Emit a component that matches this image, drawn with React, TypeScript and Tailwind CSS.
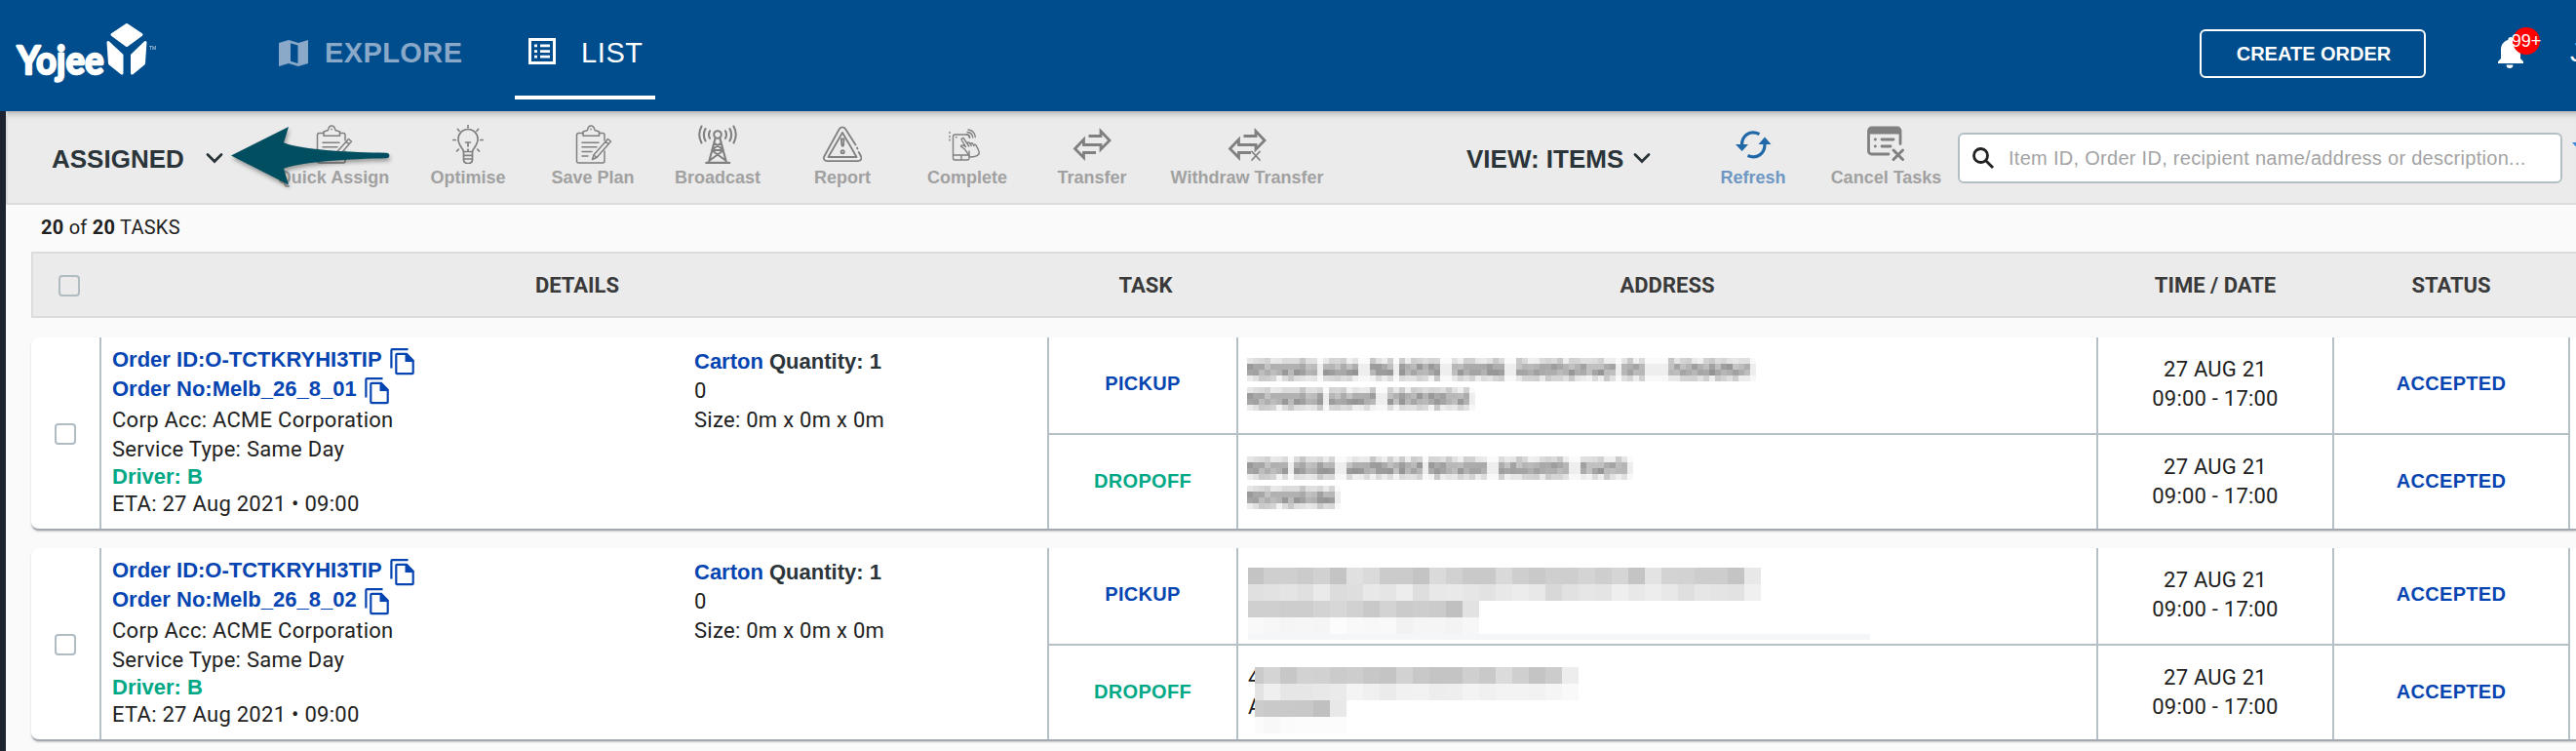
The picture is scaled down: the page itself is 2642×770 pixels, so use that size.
import type { ReactNode } from "react";

const ARIAL = "font-['Liberation_Sans',Arial,sans-serif]";
const ROBOTO = "font-[Roboto,sans-serif]";

function Logo() {
  return (
    <svg width="152" height="66" viewBox="0 0 152 66" fill="#fff" className="shrink-0">
      <text
        x="1.5"
        y="54"
        fontFamily="Lato, sans-serif"
        fontWeight="700"
        fontSize="40"
        stroke="#fff"
        strokeWidth="2.4"
        strokeLinejoin="round"
        textLength="89"
        lengthAdjust="spacingAndGlyphs"
      >
        Yojee
      </text>
      <g stroke="#fff" strokeWidth="3" strokeLinejoin="round">
        <path d="M114 3.5 129 13.5 114 24.500 99 13.500z" />
        <path d="M95 21.500 109 34.500V53L96.500 43z" />
        <path d="M133 21.500 119.500 34.500V53L131.500 43z" />
      </g>
      <text x="137" y="28.500" fontFamily="Liberation Sans, sans-serif" fontSize="5" opacity=".8">TM</text>
    </svg>
  );
}

function MapIcon() {
  return (
    <svg width="30" height="27" viewBox="0 0 30 27" fill="#8aa8c8" fillRule="evenodd">
      <path d="M0 3 10 0l10 3L30 0v24l-10 3-10-3-10 3zM12 3.200v18.500L19.500 24V5.500z" />
    </svg>
  );
}

function ListIcon() {
  return (
    <svg width="28" height="27" viewBox="0 0 28 27" fill="#fff">
      <path fillRule="evenodd" d="M0 0h28v27H0zM3 3v21h22V3z" />
      <path d="M6 6.500h3v2.800H6zM12 6.500h10v2.800H12zM6 12.200h3V15H6zM12 12.200h10V15H12zM6 17.800h3v2.800H6zM12 17.800h10v2.800H12z" />
    </svg>
  );
}

function Icon({ children, w = 1.7 }: { children: ReactNode; w?: number }) {
  return (
    <svg
      width="40"
      height="40"
      viewBox="0 0 40 40"
      fill="none"
      stroke="#808080"
      strokeWidth={w}
      strokeLinecap="round"
      strokeLinejoin="round"
      className="shrink-0"
    >
      {children}
    </svg>
  );
}

const Clipboard = () => (
  <Icon w={1.5}>
    <path d="M10 8.500H5.500a2 2 0 0 0-2 2V37a2 2 0 0 0 2 2h24.500a2 2 0 0 0 2-2V27M26.500 8.500H30a2 2 0 0 1 2 2V16" />
    <path d="M10 11.200V7l4.500-1.500C15 2.500 16 1 18 1s3.500 1.500 4 4.500L26.500 7v4.200z" />
    <path d="M18 4.200v.6M9 18.200h17M9 22.700h15M9 27.500h10M9 32h6" />
    <path d="m35.500 14.500 3 2.500-14.500 16.500-4.500 2 1.500-4.700zM33 17l3 2.700M21 31l3 2.500" />
  </Icon>
);

const Bulb = () => (
  <Icon w={1.7}>
    <path d="M15.500 27.500c0-3-5.500-6-5.500-13a10 10 0 0 1 20 0c0 7-5.500 10-5.500 13z" />
    <path d="M15.500 27.500v8c0 2.500 2 4 4.500 4s4.500-1.500 4.500-4v-8M16 31.300h8.500M16 35h8.500M17.500 18h5M20 18v4M20 25v2" />
    <path d="M20 .8v2M9.500 4.500l1.500 1.800M30.500 4.500 29 6.300M4.800 15.500h2.500M32.700 15.500h2.500M8.500 27l1.800-1.800M31.500 27l-1.800-1.800" />
  </Icon>
);

const Tower = () => (
  <Icon w={2.1}>
    <circle cx="20" cy="10" r="3.800" />
    <path strokeWidth="2.5" d="M8.500 39H32" />
    <path d="M17.500 14 11 38.500M22.500 14 29 38.500M16.500 18.500l9 7M23.500 18.500l-9 7M14.500 26.500l13 9.500M25.500 26.500l-13 9.500M14.500 26h11" />
    <path d="M12 6.300a8 8 0 0 0 0 7.500M28 6.300a8 8 0 0 1 0 7.500M7.500 4a13 13 0 0 0 0 12.300M32.500 4a13 13 0 0 1 0 12.300M3.500 1.500a18 18 0 0 0 0 17M36.500 1.500a18 18 0 0 1 0 17" />
  </Icon>
);

const Warning = () => (
  <Icon w={1.8}>
    <path d="M33.500 20.500 23.300 4.500a3.700 3.700 0 0 0-6.600 0L1.500 32c-1.500 2.700 0 5.200 3 5.200h31c3.500 0 5-2.500 3.300-5.500l-2-3.700M35 23.500l.5 1" />
    <path d="M20 8 5.500 33h29L28 21.500 20 8" />
    <path d="M18.800 14.500h2.800l-.6 7h-1.500z" />
    <circle cx="20.200" cy="27.800" r="1.600" />
  </Icon>
);

const Tap = () => (
  <Icon w={1.4}>
    <path d="M22 27v7a2 2 0 0 1-2 2H7.500a2 2 0 0 1-2-2V12a2 2 0 0 1 2-2H20a2 2 0 0 1 2 2v1M5.500 31H22M14 32v3M8.500 12.800h.6" />
    <path d="M18.500 26.500c-1.500-2.500-3.500-3-5-4.800 1-1.500 3.500-.6 5 .8l-4.500-7.500c0-1.800 2-1.800 2.800-.6l5 7.600-1.800-3c.5-1.400 2-1.200 2.600-.2l1.600 2.700-1-2c.8-1.100 2-.8 2.600.1l1.200 2-.5-1c.7-.9 1.800-.5 2.400.3 1.600 2.600 3.600 6.100 3.300 8.600-1.500 2.300-6 3.500-9.200 3.500-2-1.500-2.300-4-4.500-6.500z" />
    <path d="M2 7.500v1M2 11.500v1M2 15v1M19.500 10c1.800.2 3 1.500 3.300 3.200M20 7.500c3.500.3 5.500 2.500 5.800 5.500M21 5c4.500.5 6.800 3.500 7.300 7.500" />
  </Icon>
);

const Arrows = ({ x = false }: { x?: boolean }) => (
  <Icon w={2.8}>
    <g strokeLinecap="butt" strokeLinejoin="miter">
      <path d="M16.500 11.500H29V6.500L38 16 29 25v-4.500H11.500V15L2.500 24.500l9 9v-5H24" />
    </g>
    {x && <path strokeWidth="1.8" d="M25 27.500l8 8.500M33 27.500l-8 8.500" />}
  </Icon>
);

const Refresh = () => (
  <svg width="40" height="40" viewBox="0 0 40 40" fill="none" stroke="#2068a8" strokeWidth="3.2">
    <path d="M26.500 9.500C17 5 8.500 10.500 8.500 20.500M14.500 31.500c9.500 4 17.500-2 17.500-11.500" />
    <path fill="#2068a8" stroke="none" d="M2 20h13l-6.300 7zM25.500 20h13L32 12.500z" />
  </svg>
);

const CancelTasks = () => (
  <svg width="40" height="40" viewBox="0 0 40 40" fill="none" stroke="#808080" strokeWidth="2.8" strokeLinecap="round">
    <path d="M34 19.500V6a3 3 0 0 0-3-3H4.500a3 3 0 0 0-3 3v21a3 3 0 0 0 3 3H22" />
    <path fill="#808080" stroke="none" d="M1.500 4.500 4 2h27.500L34 4.500V9.500H1.500z" />
    <path d="M8.200 15h.2M8.200 22h.2M15 15h12M15 22h9" />
    <path d="M27 26l9.500 9.500M36.500 26 27 35.500" strokeWidth="3" />
  </svg>
);

function Chevron() {
  return (
    <svg width="18" height="12" viewBox="0 0 18 12" fill="none" stroke="#2a3439" strokeWidth="2.8" strokeLinecap="round">
      <path d="M2 2.500 9 9.500 16 2.500" />
    </svg>
  );
}

function Tool({ label, width, children, active = false }: { label: string; width: string; children: ReactNode; active?: boolean }) {
  return (
    <div className={`flex ${width} shrink-0 flex-col items-center pt-3 ${ARIAL}`}>
      {children}
      <span className={`mt-0.5 h-6 whitespace-nowrap text-[18px] font-bold leading-6 ${active ? "text-[#6f97c3]" : "text-[#a1a1a1]"}`}>{label}</span>
    </div>
  );
}

function Checkbox() {
  return <span className="block size-[22px] shrink-0 rounded-[4px] border-2 border-[#b0bbc2]" />;
}

function CopyIcon() {
  return (
    <svg width="26" height="28" viewBox="0 0 26 28" fill="none" stroke="#0645b1" strokeWidth="2.2" className="shrink-0">
      <path d="M1.400 20.500V2.200a1 1 0 0 1 1-1H18.500" />
      <path d="M7.300 5.800H17l6.700 7v12.400a1 1 0 0 1-1 1H7.300a1 1 0 0 1-1-1V6.800a1 1 0 0 1 1-1z" />
      <path fill="#0645b1" stroke="none" d="M15.500 5v9H25z" />
    </svg>
  );
}

type Word = [start: number, length: number];

const BASE = [219, 174, 170, 222];
const GAP = [250, 238, 238, 248];

function shade(row: number, col: number, words: Word[]) {
  if (!words.some(([start, length]) => col >= start && col < start + length)) return GAP[row];
  const h = Math.sin((col + 1) * 12.9898 + (row + 1) * 78.233) * 43758.5453;
  const noise = (h - Math.floor(h) - 0.5) * (row === 0 || row === 3 ? 44 : 46);
  return BASE[row] + noise;
}

/* Redacted line of text: every word is a run of grey 6px cells, four cells tall. */
function RedactedLine({ words }: { words: Word[] }) {
  const [start, length] = words[words.length - 1];
  return (
    <div className="flex h-6">
      {Array.from({ length: start + length + 1 }, (_, c) => (
        <div key={c} className="flex w-1.5 flex-col">
          {BASE.map((_, r) => {
            const v = Math.round(shade(r, c, words));
            return <span key={r} className="h-1.5" style={{ background: `rgb(${v},${v},${v})` }} />;
          })}
        </div>
      ))}
    </div>
  );
}

/* Redacted block: each pair of hex digits is one grey 17px cell. */
function RedactedBlock({ rows, first }: { rows: string[]; first: number }) {
  return (
    <div className="flex flex-col">
      {rows.map((row, i) => (
        <div key={i} className="flex h-[17px]">
          {row.split(" ").map((c, j) => (
            <span key={j} className="h-full" style={{ width: j === 0 ? first : 17, background: `#${c}${c}${c}` }} />
          ))}
        </div>
      ))}
    </div>
  );
}

const LINE_A: Word[] = [[0, 12], [13, 6], [21, 4], [26, 7], [35, 9], [46, 17], [64, 4], [72, 14]];
const LINE_B: Word[] = [[0, 13], [14, 8], [24, 14]];
const LINE_C: Word[] = [[0, 7], [8, 7], [17, 13], [31, 10], [43, 12], [57, 8]];
const LINE_D: Word[] = [[0, 15]];

const BLOCK_A = [
  "c4 cf cf cb d1 c4 e0 da cb cb c4 da d1 c9 c9 d9 ce c9 cf ce d4 ce d5 c4 e3 d3 d2 cd cd c4 e8",
  "e0 e2 e4 e0 ea dc de e8 e5 ed de e8 e9 e6 e2 e8 ec e8 d8 e1 e6 e4 ee e8 ed e8 df e6 e4 e2 f0",
  "cf cf cd cd d3 d7 d1 c9 d3 cb cd cb c0 e2",
  "f9 f7 f5 f6 f5 fc f9 f8 f9 f2 f5 f5 f3 f7",
];
const BLOCK_B = [
  "ca d4 c7 d2 d1 cb cd c7 c4 d2 c8 c4 c4 cf c9 db cf c4 cc ed",
  "e3 ef e6 e6 e8 ea f4 f0 eb f1 f2 ed ee f3 f0 f3 f3 f2 f5 f9",
  "cc c9 c9 c8 c0 e8",
  "fb f8 fb fc fc fc",
];

function Stop({ last = false, address }: { last?: boolean; address: ReactNode }) {
  const cell = "shrink-0 border-r-2 border-[#b5bfc6]";
  return (
    <div className={`flex w-[1560px] shrink-0 ${last ? "h-24" : "h-[100px] border-b-2 border-[#b5bfc6]"}`}>
      <div className={`${cell} w-[194px] pt-[33px] text-center ${ARIAL} text-[20px] font-bold leading-7 tracking-[.3px] ${last ? "text-[#00a886]" : "text-[#0645b1]"}`}>
        {last ? "DROPOFF" : "PICKUP"}
      </div>
      <div className={`${cell} w-[882px] overflow-hidden`}>{address}</div>
      <div className={`${cell} w-[242px] pt-[18px] text-center text-[22px] leading-[30px] tracking-[.22px]`}>
        27 AUG 21
        <br />
        09:00 - 17:00
      </div>
      <div className={`${cell} w-[242px] pt-[33px] text-center ${ARIAL} text-[20px] font-bold leading-7 tracking-[.3px] text-[#0645b1]`}>ACCEPTED</div>
    </div>
  );
}

function OrderCard({ orderNo, pickup, dropoff }: { orderNo: string; pickup: ReactNode; dropoff: ReactNode }) {
  const link = `flex h-[30px] ${ARIAL} text-[22px] font-bold leading-[30px] tracking-normal text-[#0645b1]`;
  return (
    <div className="flex h-[198px] shrink-0 overflow-hidden rounded-l-[8px] border-b-2 border-[#a3a9ae] bg-white shadow-[0_1px_2px_rgba(0,0,0,.2)]">
      <div className="flex w-[72px] shrink-0 items-center border-r-2 border-[#b5bfc6] pl-6 pt-0.5">
        <Checkbox />
      </div>
      <div className="w-[598px] shrink-0 whitespace-nowrap pl-[11px] pt-2 text-[22px] tracking-[.27px]">
        <div className={link}>
          <span className="w-[285px]">Order ID:O-TCTKRYHI3TIP</span>
          <span className="mt-[3px]"><CopyIcon /></span>
        </div>
        <div className={link}>
          <span className="w-[259px]">Order No:{orderNo}</span>
          <span className="mt-[3px]"><CopyIcon /></span>
        </div>
        <div className="h-8 leading-[33px]">Corp Acc: ACME Corporation</div>
        <div className="h-7 leading-[29px]">Service Type: Same Day</div>
        <div className={`h-7 ${ARIAL} text-[22px] font-bold leading-[30px] tracking-normal text-[#00a886]`}>Driver: B</div>
        <div className="h-7 leading-[30px]">ETA: 27 Aug 2021 • 09:00</div>
      </div>
      <div className="w-[374px] shrink-0 border-r-2 border-[#b5bfc6] pl-[10px] pt-2.5 text-[22px] leading-[30px] tracking-[.27px]">
        <div className={`h-[30px] ${ARIAL} font-bold leading-[30px] tracking-normal text-[#2a3439]`}>
          <span className="text-[#0645b1]">Carton</span> Quantity: 1
        </div>
        <div>0</div>
        <div>Size: 0m x 0m x 0m</div>
      </div>
      <div className="shrink-0">
        <Stop address={pickup} />
        <Stop last address={dropoff} />
      </div>
    </div>
  );
}

export default function App() {
  return (
    <div className={`flex h-[770px] w-full flex-col overflow-hidden bg-[#fafafa] text-[#212121] ${ROBOTO}`}>
      <header className={`flex h-[114px] shrink-0 bg-[#004d8e] ${ARIAL} text-white`}>
        <div className="w-[286px] shrink-0 pl-4 pt-[22px]">
          <Logo />
        </div>
        <div className="flex w-[242px] shrink-0 pt-[41px] text-[#8aa8c8]">
          <MapIcon />
          <span className="-mt-1 ml-[17px] text-[29px] font-bold leading-[34px] tracking-[.4px]">EXPLORE</span>
        </div>
        <div className="flex h-[102px] w-36 shrink-0 border-b-4 border-white pl-3.5 pt-[39px]">
          <ListIcon />
          <span className="-mt-0.5 ml-[26px] text-[29px] leading-[34px] tracking-[.6px]">LIST</span>
        </div>
        <div className="ml-auto mt-[30px] flex h-[50px] w-[232px] shrink-0 items-center justify-center rounded-[6px] border-2 border-white pb-px pl-0.5 text-[20px] font-bold">CREATE ORDER</div>
        <div className="relative ml-[68px] w-20 shrink-0 pl-1.5 pt-[38px]">
          <svg width="26" height="32" viewBox="0 0 26 32" fill="#fff">
            <path d="M13 0c2 0 2.700 1.500 2.700 3C20.500 4.300 23 8.300 23 13v9l3 3v2H0v-2l3-3v-9c0-4.700 2.500-8.700 7.300-10C10.300 1.500 11 0 13 0zM8.500 28.500h7C15.500 31 14 32 12 32s-3.500-1-3.500-3.500z" />
          </svg>
          <span className="absolute left-[21px] top-7 flex size-7 items-center justify-center whitespace-nowrap rounded-full bg-[#f00] text-[18px]">99+</span>
        </div>
        <span className="w-1.5 shrink-0 overflow-hidden pt-[38px] text-[28px] leading-8">J</span>
      </header>

      <div className="flex min-h-0 flex-1">
        <div className="w-1.5 shrink-0 bg-[#1d2331]" />
        <main className="flex min-w-0 flex-1 flex-col">
          <div className="relative flex h-24 shrink-0 border-b-2 border-l-2 border-t-2 border-[#dcdcdc] border-t-[#c5c2c2] bg-[#ebebeb] shadow-[inset_0_7px_6px_-6px_rgba(0,0,0,.22)]">
            <div className={`flex w-[260px] shrink-0 pl-[45px] pt-[31px] ${ARIAL} text-[26px] font-bold leading-8 text-[#2a3439]`}>
              ASSIGNED
              <span className="ml-[22px] mt-[9px]"><Chevron /></span>
            </div>
            <Tool label="Quick Assign" width="w-[148px]"><Clipboard /></Tool>
            <Tool label="Optimise" width="w-32"><Bulb /></Tool>
            <Tool label="Save Plan" width="w-32"><Clipboard /></Tool>
            <Tool label="Broadcast" width="w-32"><Tower /></Tool>
            <Tool label="Report" width="w-32"><Warning /></Tool>
            <Tool label="Complete" width="w-32"><Tap /></Tool>
            <Tool label="Transfer" width="w-32"><Arrows /></Tool>
            <Tool label="Withdraw Transfer" width="w-[190px]"><Arrows x /></Tool>
            <div className={`ml-[130px] flex w-[230px] shrink-0 whitespace-nowrap pt-[31px] ${ARIAL} text-[26px] font-bold leading-8 text-[#2a3439]`}>
              VIEW: ITEMS
              <span className="ml-[10px] mt-[9px]"><Chevron /></span>
            </div>
            <Tool label="Refresh" width="w-32" active><Refresh /></Tool>
            <Tool label="Cancel Tasks" width="w-[145px]"><CancelTasks /></Tool>
            <div className={`ml-px mt-5 flex h-[52px] w-[620px] shrink-0 items-center rounded-[6px] border-2 border-[#b4bfc5] bg-white pl-3 ${ARIAL} text-[20px] text-[#a3a3a3]`}>
              <svg width="24" height="24" viewBox="0 0 24 24" fill="none" stroke="#212121" strokeWidth="2.8">
                <circle cx="9.500" cy="9.500" r="7" />
                <path d="m14.500 14.500 7.500 7.500" />
              </svg>
              <span className="ml-[14px] whitespace-nowrap pb-px tracking-[.29px]">Item ID, Order ID, recipient name/address or description...</span>
            </div>
            <svg width="14" height="8" viewBox="0 0 14 8" className="ml-2.5 mt-[30px] shrink-0">
              <path d="M0 0h14L7 8z" fill="#3b86d8" />
            </svg>
            <svg width="180" height="72" viewBox="0 0 180 72" className="absolute left-[222px] top-[10px] drop-shadow-[1px_3px_2px_rgba(0,0,0,.35)]">
              <path fill="#004e5f" d="M7 33.500 66 4l-5 16.200C80 28 130 30 166 30.700c4.500 0 4.500 5.600 0 5.600-36 .7-86 3.200-105 10.500L66 63.500z" />
            </svg>
          </div>

          <div className="h-12 shrink-0 pl-9 pt-2 text-[20px] leading-[30px] tracking-[.25px]">
            <b>20</b> of <b>20</b> TASKS
          </div>

          <div className="ml-[26px] flex h-[68px] shrink-0 items-center border-2 border-r-0 border-[#dcdcdc] bg-[#ebebeb] text-center text-[22px] font-bold text-[#3a3a3a]">
            <div className="w-[72px] shrink-0 pl-[26px] pt-0.5"><Checkbox /></div>
            <div className="w-[972px] shrink-0">DETAILS</div>
            <div className="w-[194px] shrink-0">TASK</div>
            <div className="w-[876px] shrink-0">ADDRESS</div>
            <div className="w-[248px] shrink-0">TIME / DATE</div>
            <div className="w-[236px] shrink-0">STATUS</div>
          </div>

          <div className="ml-[26px] flex flex-col gap-[18px] pt-5">
            <OrderCard
              orderNo="Melb_26_8_01"
              pickup={
                <div className="flex flex-col gap-1.5 pl-[9px] pt-[21px]">
                  <RedactedLine words={LINE_A} />
                  <RedactedLine words={LINE_B} />
                </div>
              }
              dropoff={
                <div className="flex flex-col gap-1.5 pl-[9px] pt-[22px]">
                  <RedactedLine words={LINE_C} />
                  <RedactedLine words={LINE_D} />
                </div>
              }
            />
            <OrderCard
              orderNo="Melb_26_8_02"
              pickup={
                <div className="pl-2.5 pt-5">
                  <RedactedBlock rows={BLOCK_A} first={16} />
                  <div className="h-1.5 w-[638px] bg-[#f5f6f8]" />
                </div>
              }
              dropoff={
                <div className="flex pl-2.5 pt-[18px]">
                  <div className="w-[7px] shrink-0 overflow-hidden text-[22px] leading-[30px]">
                    4<br />A
                  </div>
                  <div className="pt-1"><RedactedBlock rows={BLOCK_B} first={9} /></div>
                </div>
              }
            />
          </div>
        </main>
      </div>
    </div>
  );
}
